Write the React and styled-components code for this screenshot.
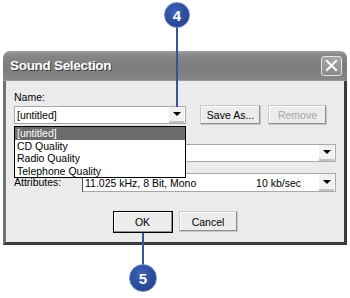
import React from 'react'
import styled, { createGlobalStyle } from 'styled-components'

const GlobalStyle = createGlobalStyle`
  html, body {
    margin: 0;
    padding: 0;
    background: #fff;
  }
  body {
    font-family: "Liberation Sans", Arial, sans-serif;
  }
`

const Page = styled.div`
  position: relative;
  width: 350px;
  height: 298px;
  padding: 51px 0 0 3px;
  box-sizing: border-box;
  overflow: hidden;
`

const Dialog = styled.div`
  width: 344px;
  height: 194px;
  display: flex;
  flex-direction: column;
  border-radius: 7px 7px 0 0;
  overflow: hidden;
  background: #ebebeb;
`

const TitleBar = styled.div`
  flex: none;
  height: 30px;
  display: flex;
  align-items: center;
  justify-content: space-between;
  padding: 0 5px 0 7px;
  background: linear-gradient(#9e9e9e 0%, #858585 18%, #7c7c7c 60%, #888 100%);
  border-bottom: 1px solid #9a9a9a;
  box-sizing: border-box;
`

const Title = styled.span`
  color: #fff;
  font-weight: bold;
  font-size: 13.5px;
  letter-spacing: -0.3px;
  text-shadow: 1px 1px 0 #3c3c3c;
`

const CloseButton = styled.div`
  width: 21px;
  height: 20px;
  box-sizing: border-box;
  border: 1px solid #e6e6e6;
  border-radius: 3px;
  background: linear-gradient(#a6a6a6, #8a8a8a);
  display: flex;
  align-items: center;
  justify-content: center;
`

const Body = styled.div`
  flex: 1;
  display: flex;
  flex-direction: column;
  padding: 10px 8px 0 8px;
  border-left: 3px solid #727272;
  border-right: 3px solid #3c3c3c;
  border-bottom: 3px solid #3c3c3c;
  font-size: 10.5px;
  color: #000;
`

const Label = styled.div`
  line-height: 13px;
  height: 13px;
  width: ${p => p.width || 'auto'};
  flex: none;
`

const Row = styled.div`
  display: flex;
  align-items: center;
  height: ${p => p.h}px;
  margin-top: ${p => p.gap}px;
`

const ComboWrap = styled.div`
  position: relative;
  width: 172px;
  height: 18px;
`

const Combo = styled.div`
  flex: 1;
  height: ${p => p.h || 18}px;
  display: flex;
  align-items: center;
  box-sizing: border-box;
  background: #fff;
  border: 1px solid #a8a8a8;
  border-left-color: ${p => (p.sunken ? '#4a4a4a' : '#a8a8a8')};
`

const ComboText = styled.span`
  flex: 1;
  padding-left: 2px;
  white-space: nowrap;
`

const Rate = styled.span`
  margin-right: 18px;
`

const ArrowBox = styled.div`
  width: 15px;
  height: 100%;
  display: flex;
  align-items: center;
  justify-content: center;
  background: #f1f1f1;
  border-bottom: 2px solid #c4c4c4;
  box-sizing: border-box;
  margin-right: 1px;

  &::after {
    content: '';
    border-left: 4px solid transparent;
    border-right: 4px solid transparent;
    border-top: 4px solid #000;
  }
`

const Button = styled.div`
  width: ${p => p.w}px;
  height: ${p => p.h || 20}px;
  margin-left: ${p => p.ml || 0}px;
  box-sizing: border-box;
  display: flex;
  align-items: center;
  justify-content: center;
  background: #ececec;
  color: ${p => (p.disabled ? '#a6a6a6' : '#000')};
  border: 1px solid ${p => (p.primary ? '#000' : '#c8c8c8')};
  box-shadow: inset -1px -1px 0 #8e8e8e, inset 1px 1px 0 #fff;
  flex: none;
`

const DropList = styled.div`
  position: absolute;
  top: 20px;
  left: 0;
  width: 172px;
  box-sizing: border-box;
  border: 1px solid #000;
  background: #fff;
  z-index: 2;
`

const Item = styled.div`
  height: 12.5px;
  line-height: 12.5px;
  padding-left: 2px;
  background: ${p => (p.selected ? '#6b6b6b' : 'transparent')};
  color: ${p => (p.selected ? '#fff' : '#000')};
  white-space: nowrap;
`

const ButtonRow = styled.div`
  display: flex;
  justify-content: center;
  align-items: flex-start;
  gap: 6px;
  margin-top: 19px;
`

const CalloutLine = styled.div`
  position: absolute;
  left: ${p => p.x}px;
  top: ${p => p.top}px;
  height: ${p => p.len}px;
  width: 2px;
  background: #34559c;
  z-index: 3;
`

const Callout = styled.div`
  position: absolute;
  left: ${p => p.x}px;
  top: ${p => p.y}px;
  width: ${p => p.size}px;
  height: ${p => p.size}px;
  border-radius: 50%;
  box-sizing: border-box;
  border: 1px solid #6f8ac4;
  background: radial-gradient(circle at 40% 35%, #3d63b4 0%, #2a4c9a 55%, #1f3d84 100%);
  color: #fff;
  font-weight: bold;
  font-size: 15px;
  display: flex;
  align-items: center;
  justify-content: center;
  z-index: 4;
`

const items = ['[untitled]', 'CD Quality', 'Radio Quality', 'Telephone Quality']

export default function App() {
  return (
    <>
      <GlobalStyle />
      <Page>
        <Dialog>
          <TitleBar>
            <Title>Sound Selection</Title>
            <CloseButton>
              <svg width="13" height="13" viewBox="0 0 13 13">
                <path d="M2 2 L11 11 M11 2 L2 11" stroke="#fff" strokeWidth="2" strokeLinecap="square" />
              </svg>
            </CloseButton>
          </TitleBar>
          <Body>
            <Label>Name:</Label>
            <Row h={20} gap={1}>
              <ComboWrap>
                <Combo>
                  <ComboText>[untitled]</ComboText>
                  <ArrowBox />
                </Combo>
                <DropList>
                  {items.map((t, i) => (
                    <Item key={t} selected={i === 0}>{t}</Item>
                  ))}
                </DropList>
              </ComboWrap>
              <Button w={61} ml={14}>Save As...</Button>
              <Button w={59} ml={7} disabled>Remove</Button>
            </Row>
            {/* format row sits under the open list, so its label is covered */}
            <Row h={18} gap={19}>
              <Label width="68px" />
              <Combo>
                <ComboText />
                <ArrowBox />
              </Combo>
            </Row>
            <Row h={19} gap={11}>
              <Label width="68px">Attributes:</Label>
              <Combo h={19} sunken>
                <ComboText>11.025 kHz, 8 Bit, Mono</ComboText>
                <Rate>10 kb/sec</Rate>
                <ArrowBox />
              </Combo>
            </Row>
            <ButtonRow>
              <Button w={60} h={22} primary>OK</Button>
              <Button w={59} h={21}>Cancel</Button>
            </ButtonRow>
          </Body>
        </Dialog>
        <CalloutLine x={176} top={27} len={80} />
        <Callout x={164} y={2} size={26}>4</Callout>
        <CalloutLine x={142} top={233} len={32} />
        <Callout x={129} y={264} size={28}>5</Callout>
      </Page>
    </>
  )
}
